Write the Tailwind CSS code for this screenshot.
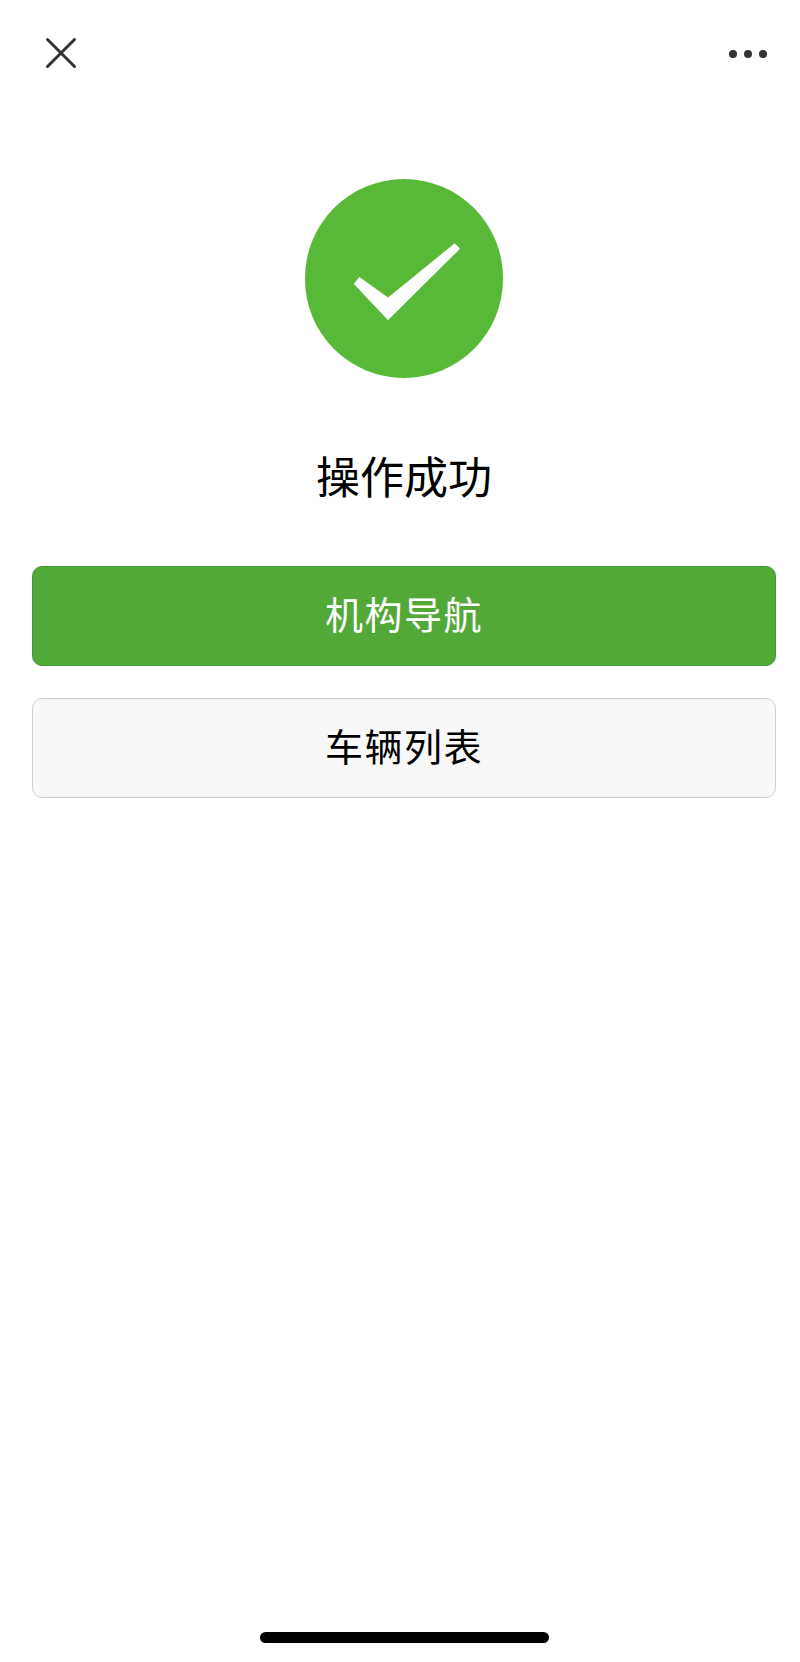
<!DOCTYPE html>
<html lang="zh">
<head>
    <meta charset="UTF-8">
    <title>操作成功</title>
    <script src="https://cdn.jsdelivr.net/npm/@tailwindcss/browser@4"></script>
</head>
<body class="bg-white font-['Noto_Sans_CJK_SC',sans-serif]">
    <div class="relative flex h-[1662px] w-[800px] flex-col overflow-hidden">
        <!-- top bar -->
        <div class="flex h-[106px] items-center justify-between pl-[45px] pr-[33px]">
            <svg class="h-[32px] w-[32px]" viewBox="0 0 32 32" fill="none" stroke="#333" stroke-width="3" stroke-linecap="round">
                <path d="M2.5 2.5L29.5 29.5M29.5 2.5L2.5 29.5" />
            </svg>
            <div class="mt-[2px] flex gap-[7px]">
                <span class="h-[8px] w-[8px] rounded-full bg-[#333]"></span>
                <span class="h-[8px] w-[8px] rounded-full bg-[#333]"></span>
                <span class="h-[8px] w-[8px] rounded-full bg-[#333]"></span>
            </div>
        </div>

        <div class="pl-[32px] pr-[24px]">
            <!-- result -->
            <div class="mt-[73px] flex justify-center">
                <div class="h-[199px] w-[198px] rounded-full bg-[#58b938]">
                    <svg class="h-[199px] w-[198px]" viewBox="0 0 198 199" fill="#fff">
                        <path d="M49.3 105L54.3 98.3L83 119L149.7 64.7L154.7 69.7L83 140.7Z" stroke="#fff" stroke-width="0.8" stroke-linejoin="round" />
                    </svg>
                </div>
            </div>
            <h1 class="mt-[67px] text-center text-[44px] leading-[60px] font-normal text-black">操作成功</h1>

            <!-- buttons -->
            <div class="mt-[61px] flex flex-col gap-[32px]">
                <button class="h-[100px] rounded-[10px] border border-[#46943a] bg-[#52a938] pb-[8px] text-[38px] tracking-[1.5px] text-white">机构导航</button>
                <button class="h-[100px] rounded-[10px] border border-[#cfcfcf] bg-[#f8f8f8] pb-[8px] text-[38px] tracking-[1.5px] text-black">车辆列表</button>
            </div>
        </div>

        <!-- home indicator -->
        <div class="absolute bottom-[19px] left-[260px] h-[11px] w-[289px] rounded-full bg-black"></div>
    </div>
</body>
</html>
